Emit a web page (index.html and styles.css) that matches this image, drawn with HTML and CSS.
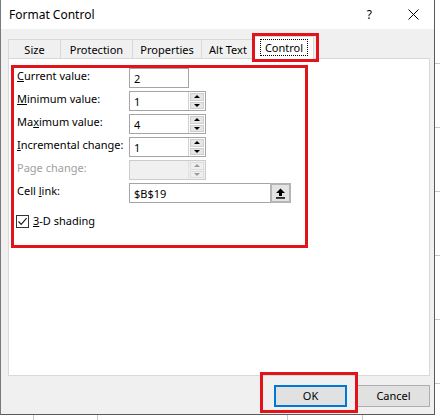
FILE: index.html
```html
<!DOCTYPE html>
<html>
<head>
<meta charset="utf-8">
<link rel="stylesheet" href="styles.css">
</head>
<body>
<div class="screen">
  <div class="top">
    <div class="dialog">
      <div class="titlebar">
        <span class="title">Format Control</span>
        <span class="help">?</span>
        <svg class="close" width="11" height="11" viewBox="0 0 11 11"><path d="M0.5 0.5 L10.5 10.5 M10.5 0.5 L0.5 10.5" stroke="#000" stroke-width="1" fill="none"/></svg>
      </div>
      <div class="body">
        <div class="tabs">
          <div class="tab t-size">Size</div>
          <div class="tab t-prot">Protection</div>
          <div class="tab t-prop">Properties</div>
          <div class="tab t-alt">Alt Text</div>
          <div class="tab t-ctrl selected"><span class="focus">Control</span></div>
        </div>
        <div class="panel">
          <div class="form">
            <div class="lbl"><u>C</u>urrent value:</div>
            <div class="field plain"><span class="val">2</span></div>

            <div class="lbl"><u>M</u>inimum value:</div>
            <div class="field spin"><span class="val">1</span><span class="spinner"><span class="sb"><i class="up"></i></span><span class="sb"><i class="down"></i></span></span></div>

            <div class="lbl">Ma<u>x</u>imum value:</div>
            <div class="field spin"><span class="val">4</span><span class="spinner"><span class="sb"><i class="up"></i></span><span class="sb"><i class="down"></i></span></span></div>

            <div class="lbl"><u>I</u>ncremental change:</div>
            <div class="field spin"><span class="val">1</span><span class="spinner"><span class="sb"><i class="up"></i></span><span class="sb"><i class="down"></i></span></span></div>

            <div class="lbl disabled">Page change:</div>
            <div class="field spin off"><span class="val"></span><span class="spinner"><span class="sb"><i class="up"></i></span><span class="sb"><i class="down"></i></span></span></div>

            <div class="lbl">Cell <u>l</u>ink:</div>
            <div class="field link"><span class="val">$B$19</span><span class="refbtn"><svg width="11" height="11" viewBox="0 0 11 11"><path d="M5.5 0.5 L10 5 H7 V8 H4 V5 H1 Z" fill="#000"/><rect x="1" y="9.2" width="9" height="1.5" fill="#000"/></svg></span></div>
          </div>
          <div class="check-row">
            <span class="checkbox"><svg width="11" height="11" viewBox="0 0 11 11"><path d="M1.5 5.5 L4.2 8.3 L9.6 2.2" stroke="#222" stroke-width="1.2" fill="none"/></svg></span>
            <span class="check-label"><u>3</u>-D shading</span>
          </div>
        </div>
        <div class="buttons">
          <div class="btn default">OK</div>
          <div class="btn">Cancel</div>
        </div>
      </div>
    </div>
    <div class="sheet-right"></div>
  </div>
  <div class="sheet-bottom">
    <div class="col c1"></div>
    <div class="col c2"></div>
    <div class="col c3"></div>
    <div class="col c4"></div>
    <div class="col c5"></div>
  </div>

  <div class="mark mark-tab"></div>
  <div class="mark mark-form"></div>
  <div class="mark mark-ok"></div>
</div>
</body>
</html>
```

FILE: styles.css
```css
* { box-sizing: border-box; }
html, body { margin: 0; padding: 0; }
body {
  width: 440px;
  height: 420px;
  overflow: hidden;
  background: #fff;
  font-family: "Noto Sans", "Open Sans", "DejaVu Sans", sans-serif;
  font-size: 11px;
  color: #000;
}
.screen {
  position: relative;
  width: 440px;
  height: 420px;
  display: flex;
  flex-direction: column;
}
.top {
  display: flex;
  height: 415px;
}
.dialog {
  width: 435px;
  height: 415px;
  border-left: 1px solid #7a7a7a;
  border-right: 1px solid #5a5a5a;
  border-bottom: 1px solid #5a5a5a;
  display: flex;
  flex-direction: column;
}
.titlebar {
  height: 29px;
  background: #fff;
  display: flex;
  align-items: center;
  padding-left: 8px;
  padding-right: 15px;
}
.title {
  font-size: 12px;
  flex: 1;
  padding-bottom: 1px;
}
.help {
  font-size: 12px;
  margin-right: 36px;
  padding-bottom: 1px;
}
.close { display: block; margin-bottom: 1px; }

.body {
  flex: 1;
  background: #f0f0f0;
  padding: 0 4px 0 7px;
  display: flex;
  flex-direction: column;
}
.tabs {
  margin-top: 7px;
  height: 22px;
  display: flex;
  align-items: flex-end;
  position: relative;
  z-index: 1;
}
.tab {
  height: 19px;
  border: 1px solid #d9d9d9;
  border-bottom: none;
  margin-right: -1px;
  background: #f0f0f0;
  display: flex;
  align-items: center;
  justify-content: center;
  padding-top: 1px;
  font-size: 11px;
}
.t-size { width: 53px; }
.t-prot { width: 73px; }
.t-prop { width: 70px; }
.t-alt { width: 54px; }
.t-ctrl { width: 60px; }
.tab.selected {
  height: 23px;
  background: #fff;
  margin-bottom: -1px;
  padding-top: 0;
  padding-bottom: 1px;
}
.focus {
  outline: 1px dotted #000;
  outline-offset: 0;
  padding: 0 4px;
  line-height: 15px;
}
.panel {
  height: 318px;
  background: #fff;
  border: 1px solid #d9d9d9;
  padding: 9px 8px 0 8px;
}
.form {
  display: grid;
  grid-template-columns: 112px auto;
  row-gap: 3px;
  justify-content: start;
  align-items: start;
}
.lbl {
  line-height: 16px;
  white-space: nowrap;
}
.lbl.disabled { color: #a0a0a0; }
.field {
  height: 20px;
  border: 1px solid #a5a5a5;
  background: #fff;
  display: flex;
  align-items: center;
}
.val {
  flex: 1;
  padding-left: 4px;
  padding-top: 1px;
}
.plain { width: 60px; }
.spin { width: 77px; }
.link { width: 162px; }
.spin .val { border-right: 1px solid #d0d0d0; height: 100%; display: flex; align-items: center; }
.spinner {
  width: 16px;
  height: 100%;
  display: flex;
  flex-direction: column;
  padding: 1px;
  gap: 1px;
}
.sb {
  flex: 1;
  background: #e6e6e6;
  border: 1px solid #cfcfcf;
  display: flex;
  align-items: center;
  justify-content: center;
}
.up, .down {
  width: 0;
  height: 0;
  border-left: 3px solid transparent;
  border-right: 3px solid transparent;
}
.up { border-bottom: 3px solid #000; }
.down { border-top: 3px solid #000; }
.off { background: #f0f0f0; border-color: #cccccc; }
.off .val { border-right-color: #e0e0e0; }
.off .up { border-bottom-color: #9a9a9a; }
.off .down { border-top-color: #9a9a9a; }
.off .sb { background: #efefef; border-color: #dddddd; }
.refbtn {
  width: 21px;
  height: 20px;
  margin: -1px -1px -1px 0;
  background: #e3e3e3;
  border: 2px solid #b4b4b4;
  display: flex;
  align-items: center;
  justify-content: center;
}
.refbtn svg { display: block; }

.check-row {
  margin-top: 10px;
  display: flex;
  align-items: center;
  margin-left: -1px;
}
.checkbox {
  width: 13px;
  height: 13px;
  border: 1px solid #333;
  background: #fff;
  display: flex;
  align-items: center;
  justify-content: center;
  margin-right: 4px;
}
.checkbox svg { display: block; }
.check-label { line-height: 16px; }

.buttons {
  margin-top: 9px;
  display: flex;
  justify-content: flex-end;
  gap: 10px;
}
.btn {
  width: 73px;
  height: 22px;
  background: #e1e1e1;
  border: 1px solid #adadad;
  display: flex;
  align-items: center;
  justify-content: center;
  font-size: 11px;
  padding-bottom: 1px;
}
.btn.default {
  border: 2px solid #0078d7;
}

.sheet-right {
  flex: 1;
  background-color: #fff;
  background-image: repeating-linear-gradient(to bottom, transparent 0, transparent 63px, #c8c8c8 63px, #c8c8c8 64px);
}
.sheet-bottom {
  height: 5px;
  display: flex;
  background: #fff;
}
.col { height: 5px; border-right: 1px solid #c8c8c8; }
.c1 { width: 34px; }
.c2 { width: 64px; }
.c3 { width: 190px; }
.c4 { width: 75px; }
.c5 { width: 77px; border-right: none; }

.mark {
  position: absolute;
  border: 3px solid #e1141c;
  pointer-events: none;
}
.mark-tab { left: 252px; top: 33px; width: 67px; height: 29px; z-index: 5; }
.mark-form { left: 11px; top: 65px; width: 297px; height: 183px; }
.mark-ok { left: 260px; top: 372px; width: 98px; height: 41px; }
```
